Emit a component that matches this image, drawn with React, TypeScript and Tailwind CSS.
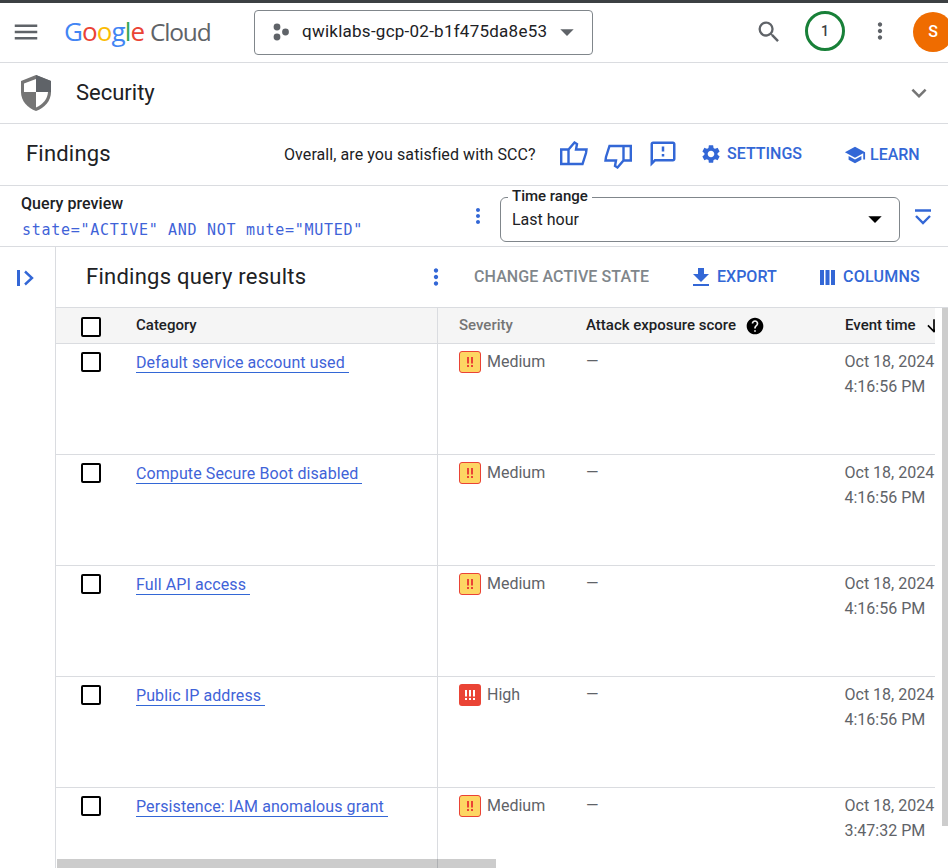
import React from "react";
import {
  MdMenu, MdSearch, MdMoreVert, MdExpandMore, MdOutlineFeedback, MdSettings, MdSchool, MdHelp,
  MdArrowDownward, MdArrowDropDown,
} from "react-icons/md";

const rows = [
  { name: "Default service account used", sev: "Medium", date: "Oct 18, 2024", time: "4:16:56 PM" },
  { name: "Compute Secure Boot disabled", sev: "Medium", date: "Oct 18, 2024", time: "4:16:56 PM" },
  { name: "Full API access", sev: "Medium", date: "Oct 18, 2024", time: "4:16:56 PM" },
  { name: "Public IP address", sev: "High", date: "Oct 18, 2024", time: "4:16:56 PM" },
  { name: "Persistence: IAM anomalous grant", sev: "Medium", date: "Oct 18, 2024", time: "3:47:32 PM" },
];

function Checkbox() {
  return <div className="w-5 h-5 border-2 border-black rounded-[2px] bg-white shrink-0" />;
}

function SevIcon({ high }: { high: boolean }) {
  if (high) {
    return (
      <div className="w-[22px] h-[22px] rounded-[3px] bg-[#ea4335] flex items-center justify-center shrink-0">
        <svg width="12" height="10" viewBox="0 0 12 10">
          <path d="M1 0h2v6.5H1zM5 0h2v6.5H5zM9 0h2v6.5H9zM1 8h2v2H1zM5 8h2v2H5zM9 8h2v2H9z" fill="#fff" />
        </svg>
      </div>
    );
  }
  return (
    <div className="w-[22px] h-[22px] rounded-[3px] bg-[#fdd663] border-[1.5px] border-[#ea4335] flex items-center justify-center shrink-0">
      <svg width="8" height="10" viewBox="0 0 8 10">
        <path d="M1 0h2v6.5H1zM5 0h2v6.5H5zM1 8h2v2H1zM5 8h2v2H5z" fill="#ea4335" />
      </svg>
    </div>
  );
}

function Thumb({ down }: { down?: boolean }) {
  return (
    <svg width="28" height="25" viewBox="0 0 28 25" className={down ? "rotate-180 shrink-0" : "shrink-0"}>
      <path
        d="M1.200 8.500H8.500L14.500 1.500 17 3 16 8.500H26.500L26 12 22.500 23H1.200ZM8.500 8.500V23"
        fill="none"
        stroke="#3367d6"
        strokeWidth="2.400"
      />
    </svg>
  );
}

export default function App() {
  return (
    <div className="w-[948px] h-[868px] overflow-hidden bg-white flex flex-col text-[#202124] font-['Roboto',sans-serif]">
      <div className="h-[3px] bg-[#3c4043] shrink-0" />

      {/* Top bar */}
      <div className="h-[60px] shrink-0 border-b border-[#dadce0] flex items-center pl-[11px]">
        <MdMenu size={30} className="text-[#5f6368] shrink-0 -mt-[1px]" />
        <div className="ml-[23px] -mt-[3px] flex items-baseline text-[26px] leading-none tracking-[-0.9px] font-['Open_Sans',sans-serif] w-[152px] shrink-0">
          <span className="text-[#4285f4]">G</span>
          <span className="text-[#ea4335]">o</span>
          <span className="text-[#fbbc04]">o</span>
          <span className="text-[#4285f4]">g</span>
          <span className="text-[#34a853]">l</span>
          <span className="text-[#ea4335]">e</span>
          <span className="text-[#5f6368] ml-[6px] text-[24.5px] tracking-[-1.2px]">Cloud</span>
        </div>
        <div className="ml-[38px] -mt-[1px] w-[339px] h-[45px] border border-[#80868b] rounded-[4px] flex items-center pl-[16px] shrink-0">
          <svg width="20" height="20" viewBox="0 0 20 20" className="text-[#5f6368] shrink-0">
            <circle cx="6" cy="5" r="3.4" fill="currentColor" />
            <circle cx="6" cy="15" r="3.4" fill="currentColor" />
            <circle cx="14.5" cy="10" r="3.4" fill="currentColor" />
          </svg>
          <span className="ml-[11px] text-[17px] tracking-[0.25px] whitespace-nowrap">qwiklabs-gcp-02-b1f475da8e53</span>
          <MdArrowDropDown size={32} className="text-[#5f6368] ml-[4px] shrink-0" />
        </div>
        <MdSearch size={28} className="text-[#5f6368] ml-[162px] -mt-[2px] shrink-0" />
        <div className="ml-[22px] -mt-[3px] w-10 h-10 rounded-full border-[3px] border-[#188038] flex items-center justify-center text-[14px] font-medium text-[#3c4043] shrink-0">
          1
        </div>
        <MdMoreVert size={26} className="text-[#5f6368] ml-[22px] -mt-[4px] shrink-0" />
        <div className="ml-[20px] -mt-[1px] w-10 h-10 rounded-full bg-[#ef6c00] text-white text-[16px] font-medium flex items-center justify-center shrink-0">
          S
        </div>
      </div>

      {/* Security */}
      <div className="h-[61px] shrink-0 border-b border-[#dadce0] flex items-center pl-[20px]">
        <svg width="32" height="38" viewBox="0 0 32 38" className="shrink-0">
          <path d="M16 1 L31 7 V18 C31 27 24.500 34 16 37 C7.500 34 1 27 1 18 V7 Z" fill="#757575" />
          <path d="M16 1 L31 7 V18 H16 Z" fill="#5f6368" />
          <path d="M16 5 L4 9.500 V18 H16 Z" fill="#fff" />
          <path d="M16 18 H28 C27.500 25 23 30.500 16 33.500 Z" fill="#fff" />
        </svg>
        <span className="ml-[24px] text-[22px] leading-none">Security</span>
        <MdExpandMore size={30} className="text-[#757575] ml-auto mr-[14px]" />
      </div>

      {/* Findings */}
      <div className="h-[62px] shrink-0 border-b border-[#dadce0] flex items-center pl-[26px] text-[#3367d6]">
        <span className="text-[22px] tracking-[0.2px] text-[#202124] leading-none -mt-[2px] w-[85px] shrink-0 whitespace-nowrap">Findings</span>
        <span className="ml-[173px] w-[251px] shrink-0 text-[16px] tracking-[0.08px] text-[#202124] whitespace-nowrap">Overall, are you satisfied with SCC?</span>
        <span className="ml-[25px] -mt-[3px] flex shrink-0"><Thumb /></span>
        <span className="ml-[16px] mt-[3px] flex shrink-0"><Thumb down /></span>
        <MdOutlineFeedback size={30} className="ml-[16px] -mt-[2px] shrink-0" />
        <MdSettings size={22} className="ml-[22px] -mt-[2px] shrink-0" />
        <span className="ml-[5px] w-[76px] shrink-0 text-[16px] font-medium -mt-[2px] whitespace-nowrap">SETTINGS</span>
        <MdSchool size={22} className="ml-[41px] mt-[1px] shrink-0" />
        <span className="ml-[4px] mt-[1px] text-[16px] font-medium">LEARN</span>
      </div>

      {/* Query */}
      <div className="h-[61px] shrink-0 border-b border-[#dadce0] flex items-center pl-[21px]">
        <div className="w-[446px] shrink-0">
          <div className="text-[16px] tracking-[0.05px] font-medium leading-5 mt-[1px]">Query preview</div>
          <div className="text-[15px] leading-5 mt-[6px] ml-[1px] tracking-[0.71px] text-[#3f63d8] font-['DejaVu_Sans_Mono',monospace] whitespace-nowrap">
            state="ACTIVE" AND NOT mute="MUTED"
          </div>
        </div>
        <MdMoreVert size={24} className="text-[#3367d6] -ml-[1px] shrink-0" />
        <div className="ml-[10px] mt-[6px] relative w-[400px] h-[45px] border border-[#80868b] rounded-[6px] flex items-center pl-[11px] shrink-0">
          <span className="absolute -top-[12px] left-[7px] bg-white px-[4px] text-[15px] font-medium leading-5">Time range</span>
          <span className="text-[16px] mt-[1px]">Last hour</span>
          <MdArrowDropDown size={32} className="text-black ml-auto mr-[8px]" />
        </div>
        <svg width="18" height="18" viewBox="0 0 18 18" className="ml-[14px] mt-[2px] shrink-0">
          <path d="M1 2.500h16" stroke="#3367d6" strokeWidth="2.500" />
          <path d="M2 8l7 7 7-7" stroke="#3367d6" strokeWidth="2.400" fill="none" />
        </svg>
      </div>

      {/* Main */}
      <div className="flex-1 flex min-h-0">
        <div className="w-[56px] shrink-0 border-r border-[#dadce0] pt-[23px] pl-[17px]">
          <svg width="18" height="16" viewBox="0 0 18 16">
            <path d="M1.500 0v16" stroke="#3367d6" strokeWidth="3" />
            <path d="M8 1.500l7 6.500-7 6.500" stroke="#3367d6" strokeWidth="2.400" fill="none" />
          </svg>
        </div>

        <div className="flex-1 min-w-0 flex flex-col relative">
          {/* Title row */}
          <div className="h-[61px] shrink-0 border-b border-[#dadce0] flex items-center pl-[30px] text-[#3367d6]">
            <span className="text-[22px] tracking-[0.25px] text-[#202124] whitespace-nowrap -mt-[2px] w-[220px] shrink-0">Findings query results</span>
            <MdMoreVert size={26} className="ml-[117px] shrink-0" />
            <span className="ml-[25px] w-[176px] shrink-0 text-[16px] tracking-[0.1px] font-medium text-[#80868b] whitespace-nowrap -mt-[1px]">CHANGE ACTIVE STATE</span>
            <svg width="16" height="18" viewBox="0 0 16 18" className="ml-[43px] shrink-0 fill-current">
              <path d="M5 0h6v6h5l-8 8-8-8h5zM0 16h16v2H0z" />
            </svg>
            <span className="ml-[8px] w-[60px] shrink-0 text-[16px] font-medium -mt-[1px]">EXPORT</span>
            <svg width="15" height="15" viewBox="0 0 15 15" className="ml-[43px] shrink-0 fill-current">
              <path d="M0 0h4v15H0zM5.500 0h4v15h-4zM11 0h4v15h-4z" />
            </svg>
            <span className="ml-[8px] text-[16px] tracking-[0.25px] font-medium -mt-[1px] whitespace-nowrap">COLUMNS</span>
          </div>

          {/* Table */}
          <div className="flex-1 min-h-0 w-[879px] overflow-hidden">
            <div className="h-[36px] w-[960px] flex items-center bg-[#f5f5f5] border-b border-[#dadce0] text-[15px] font-medium">
              <div className="w-[382px] h-full shrink-0 border-r border-[#dadce0] flex items-center pl-[25px]">
                <div className="mt-[2px] flex"><Checkbox /></div>
                <span className="ml-[35px]">Category</span>
              </div>
              <span className="ml-[21px] w-[127px] shrink-0 text-[#757575]">Severity</span>
              <span className="w-[149px] shrink-0 whitespace-nowrap">Attack exposure score</span>
              <MdHelp size={20} className="ml-[10px] shrink-0 text-black" />
              <span className="ml-[80px] w-[70px] shrink-0 whitespace-nowrap">Event time</span>
              <MdArrowDownward size={20} className="ml-[9px] shrink-0 text-black" />
            </div>
            {rows.map((r) => (
              <div key={r.name + r.time} className="h-[111px] w-[960px] flex border-b border-[#dadce0] text-[16px]">
                <div className="w-[382px] shrink-0 border-r border-[#dadce0] flex items-start pl-[25px] pt-[8px]">
                  <Checkbox />
                  <span className="ml-[35px] pt-[2px] leading-[18px] tracking-[0.1px] pr-[4px] border-b border-[#3367d6] text-[#3f63d8] whitespace-nowrap">{r.name}</span>
                </div>
                <div className="w-[148px] shrink-0 flex items-start pl-[21px] pt-[7px] text-[#5f6368]">
                  <SevIcon high={r.sev === "High"} />
                  <span className="ml-[6px] leading-[21px]">{r.sev}</span>
                </div>
                <div className="w-[258.5px] shrink-0 pt-[7px] text-[#5f6368] leading-[21px]">—</div>
                <div className="shrink-0 pt-[5px] leading-[25px] text-[#5f6368] whitespace-nowrap">
                  <div>{r.date}</div>
                  <div>{r.time}</div>
                </div>
              </div>
            ))}
          </div>

          {/* Scrollbars overlay */}
          <div className="absolute left-[1px] bottom-0 w-[439px] h-[9px] bg-[#000000]/20" />
          <div className="absolute right-0 top-[61px] w-[6px] h-[518px] bg-[#cdcdcd]" />
        </div>
      </div>
    </div>
  );
}
